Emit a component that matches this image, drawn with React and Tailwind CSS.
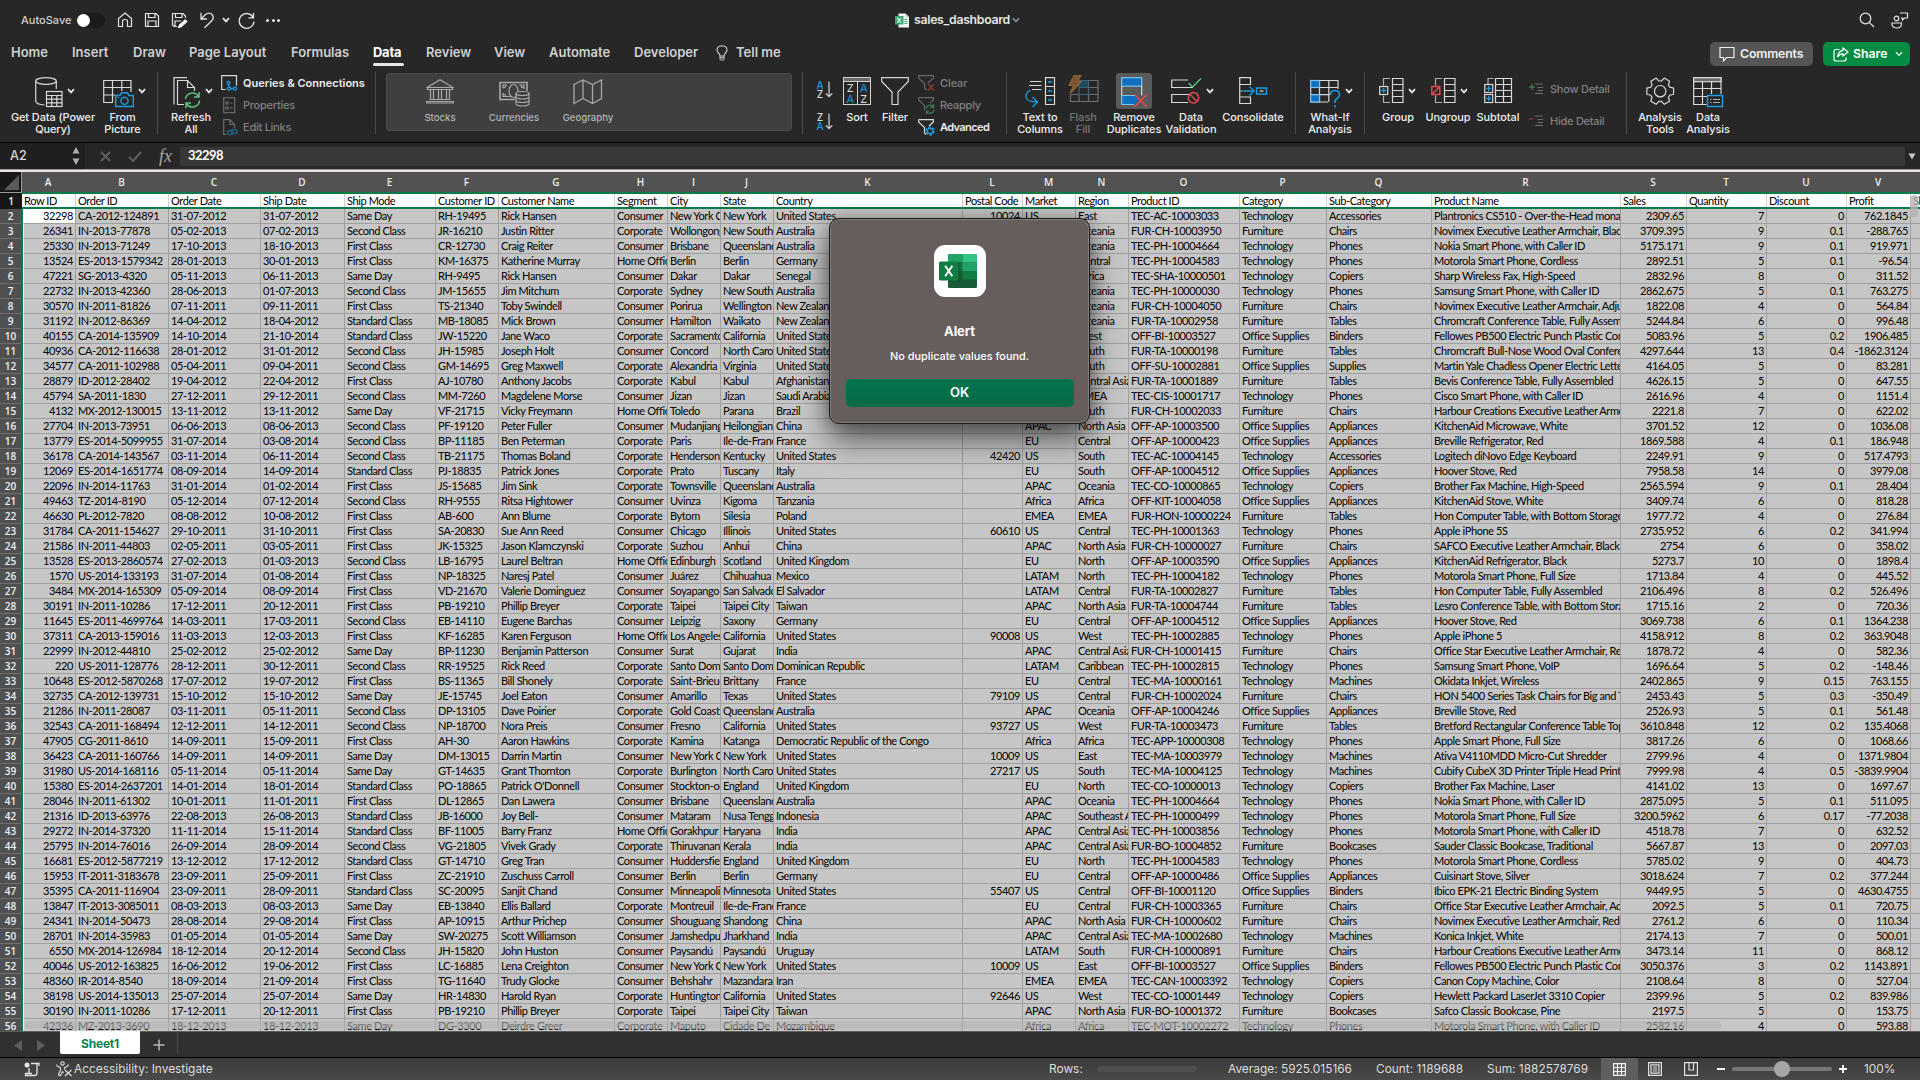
import React from "react";

const COLS = [
  ["A", "w-[54px]", 1], ["B", "w-[93px]"], ["C", "w-[92px]"], ["D", "w-[84px]"], ["E", "w-[91px]"],
  ["F", "w-[63px]"], ["G", "w-[116px]"], ["H", "w-[53px]"], ["I", "w-[53px]"], ["J", "w-[53px]"],
  ["K", "w-[189px]"], ["L", "w-[60px]", 1], ["M", "w-[53px]"], ["N", "w-[53px]"], ["O", "w-[111px]"],
  ["P", "w-[87px]"], ["Q", "w-[105px]"], ["R", "w-[189px]"], ["S", "w-[66px]", 1], ["T", "w-[80px]", 1],
  ["U", "w-[80px]", 1], ["V", "w-[64px]", 1],
];

const HEAD = "Row ID|Order ID|Order Date|Ship Date|Ship Mode|Customer ID|Customer Name|Segment|City|State|Country|Postal Code|Market|Region|Product ID|Category|Sub-Category|Product Name|Sales|Quantity|Discount|Profit".split("|");

const SHIP = { S: "Same Day", "2": "Second Class", "1": "First Class", T: "Standard Class" };
const SEG = { C: "Consumer", P: "Corporate", H: "Home Office" };
const CAT = { TEC: "Technology", FUR: "Furniture", OFF: "Office Supplies" };

const ROWS = `32298|CA-2012-124891|31-07-2012|31-07-2012|S|RH-19495|Rick Hansen|C|New York City|New York|United States|10024|US|East|TEC-AC-10003033|Accessories|Plantronics CS510 - Over-the-Head monaural|2309.65|7|0|762.1845
26341|IN-2013-77878|05-02-2013|07-02-2013|2|JR-16210|Justin Ritter|P|Wollongong|New South Wales|Australia||APAC|Oceania|FUR-CH-10003950|Chairs|Novimex Executive Leather Armchair, Black|3709.395|9|0.1|-288.765
25330|IN-2013-71249|17-10-2013|18-10-2013|1|CR-12730|Craig Reiter|C|Brisbane|Queensland|Australia||APAC|Oceania|TEC-PH-10004664|Phones|Nokia Smart Phone, with Caller ID|5175.171|9|0.1|919.971
13524|ES-2013-1579342|28-01-2013|30-01-2013|1|KM-16375|Katherine Murray|H|Berlin|Berlin|Germany||EU|Central|TEC-PH-10004583|Phones|Motorola Smart Phone, Cordless|2892.51|5|0.1|-96.54
47221|SG-2013-4320|05-11-2013|06-11-2013|S|RH-9495|Rick Hansen|C|Dakar|Dakar|Senegal||Africa|Africa|TEC-SHA-10000501|Copiers|Sharp Wireless Fax, High-Speed|2832.96|8|0|311.52
22732|IN-2013-42360|28-06-2013|01-07-2013|2|JM-15655|Jim Mitchum|P|Sydney|New South Wales|Australia||APAC|Oceania|TEC-PH-10000030|Phones|Samsung Smart Phone, with Caller ID|2862.675|5|0.1|763.275
30570|IN-2011-81826|07-11-2011|09-11-2011|1|TS-21340|Toby Swindell|C|Porirua|Wellington|New Zealand||APAC|Oceania|FUR-CH-10004050|Chairs|Novimex Executive Leather Armchair, Adjustable|1822.08|4|0|564.84
31192|IN-2012-86369|14-04-2012|18-04-2012|T|MB-18085|Mick Brown|C|Hamilton|Waikato|New Zealand||APAC|Oceania|FUR-TA-10002958|Tables|Chromcraft Conference Table, Fully Assembled|5244.84|6|0|996.48
40155|CA-2014-135909|14-10-2014|21-10-2014|T|JW-15220|Jane Waco|P|Sacramento|California|United States|95823|US|West|OFF-BI-10003527|Binders|Fellowes PB500 Electric Punch Plastic Comb|5083.96|5|0.2|1906.485
40936|CA-2012-116638|28-01-2012|31-01-2012|2|JH-15985|Joseph Holt|C|Concord|North Carolina|United States|28027|US|South|FUR-TA-10000198|Tables|Chromcraft Bull-Nose Wood Oval Conference|4297.644|13|0.4|-1862.3124
34577|CA-2011-102988|05-04-2011|09-04-2011|2|GM-14695|Greg Maxwell|P|Alexandria|Virginia|United States|22304|US|South|OFF-SU-10002881|Supplies|Martin Yale Chadless Opener Electric Letter|4164.05|5|0|83.281
28879|ID-2012-28402|19-04-2012|22-04-2012|1|AJ-10780|Anthony Jacobs|P|Kabul|Kabul|Afghanistan||APAC|Central Asia|FUR-TA-10001889|Tables|Bevis Conference Table, Fully Assembled|4626.15|5|0|647.55
45794|SA-2011-1830|27-12-2011|29-12-2011|2|MM-7260|Magdelene Morse|C|Jizan|Jizan|Saudi Arabia||EMEA|EMEA|TEC-CIS-10001717|Phones|Cisco Smart Phone, with Caller ID|2616.96|4|0|1151.4
4132|MX-2012-130015|13-11-2012|13-11-2012|S|VF-21715|Vicky Freymann|H|Toledo|Parana|Brazil||LATAM|South|FUR-CH-10002033|Chairs|Harbour Creations Executive Leather Armchair|2221.8|7|0|622.02
27704|IN-2013-73951|06-06-2013|08-06-2013|2|PF-19120|Peter Fuller|C|Mudanjiang|Heilongjiang|China||APAC|North Asia|OFF-AP-10003500|Appliances|KitchenAid Microwave, White|3701.52|12|0|1036.08
13779|ES-2014-5099955|31-07-2014|03-08-2014|2|BP-11185|Ben Peterman|P|Paris|Ile-de-France|France||EU|Central|OFF-AP-10000423|Appliances|Breville Refrigerator, Red|1869.588|4|0.1|186.948
36178|CA-2014-143567|03-11-2014|06-11-2014|2|TB-21175|Thomas Boland|P|Henderson|Kentucky|United States|42420|US|South|TEC-AC-10004145|Accessories|Logitech diNovo Edge Keyboard|2249.91|9|0|517.4793
12069|ES-2014-1651774|08-09-2014|14-09-2014|T|PJ-18835|Patrick Jones|P|Prato|Tuscany|Italy||EU|South|OFF-AP-10004512|Appliances|Hoover Stove, Red|7958.58|14|0|3979.08
22096|IN-2014-11763|31-01-2014|01-02-2014|1|JS-15685|Jim Sink|P|Townsville|Queensland|Australia||APAC|Oceania|TEC-CO-10000865|Copiers|Brother Fax Machine, High-Speed|2565.594|9|0.1|28.404
49463|TZ-2014-8190|05-12-2014|07-12-2014|2|RH-9555|Ritsa Hightower|C|Uvinza|Kigoma|Tanzania||Africa|Africa|OFF-KIT-10004058|Appliances|KitchenAid Stove, White|3409.74|6|0|818.28
46630|PL-2012-7820|08-08-2012|10-08-2012|1|AB-600|Ann Blume|P|Bytom|Silesia|Poland||EMEA|EMEA|FUR-HON-10000224|Tables|Hon Computer Table, with Bottom Storage|1977.72|4|0|276.84
31784|CA-2011-154627|29-10-2011|31-10-2011|1|SA-20830|Sue Ann Reed|C|Chicago|Illinois|United States|60610|US|Central|TEC-PH-10001363|Phones|Apple iPhone 5S|2735.952|6|0.2|341.994
21586|IN-2011-44803|02-05-2011|03-05-2011|1|JK-15325|Jason Klamczynski|P|Suzhou|Anhui|China||APAC|North Asia|FUR-CH-10000027|Chairs|SAFCO Executive Leather Armchair, Black|2754|6|0|358.02
13528|ES-2013-2860574|27-02-2013|01-03-2013|2|LB-16795|Laurel Beltran|H|Edinburgh|Scotland|United Kingdom||EU|North|OFF-AP-10003590|Appliances|KitchenAid Refrigerator, Black|5273.7|10|0|1898.4
1570|US-2014-133193|31-07-2014|01-08-2014|1|NP-18325|Naresj Patel|C|Juárez|Chihuahua|Mexico||LATAM|North|TEC-PH-10004182|Phones|Motorola Smart Phone, Full Size|1713.84|4|0|445.52
3484|MX-2014-165309|05-09-2014|08-09-2014|1|VD-21670|Valerie Dominguez|C|Soyapango|San Salvador|El Salvador||LATAM|Central|FUR-TA-10002827|Tables|Hon Computer Table, Fully Assembled|2106.496|8|0.2|526.496
30191|IN-2011-10286|17-12-2011|20-12-2011|1|PB-19210|Phillip Breyer|P|Taipei|Taipei City|Taiwan||APAC|North Asia|FUR-TA-10004744|Tables|Lesro Conference Table, with Bottom Storage|1715.16|2|0|720.36
11645|ES-2011-4699764|14-03-2011|17-03-2011|2|EB-14110|Eugene Barchas|C|Leipzig|Saxony|Germany||EU|Central|OFF-AP-10004512|Appliances|Hoover Stove, Red|3069.738|6|0.1|1364.238
37311|CA-2013-159016|11-03-2013|12-03-2013|1|KF-16285|Karen Ferguson|H|Los Angeles|California|United States|90008|US|West|TEC-PH-10002885|Phones|Apple iPhone 5|4158.912|8|0.2|363.9048
22999|IN-2012-44810|25-02-2012|25-02-2012|S|BP-11230|Benjamin Patterson|C|Surat|Gujarat|India||APAC|Central Asia|FUR-CH-10001415|Chairs|Office Star Executive Leather Armchair, Red|1878.72|4|0|582.36
220|US-2011-128776|28-12-2011|30-12-2011|2|RR-19525|Rick Reed|P|Santo Domingo|Santo Domingo|Dominican Republic||LATAM|Caribbean|TEC-PH-10002815|Phones|Samsung Smart Phone, VoIP|1696.64|5|0.2|-148.46
10648|ES-2012-5870268|17-07-2012|19-07-2012|1|BS-11365|Bill Shonely|P|Saint-Brieuc|Brittany|France||EU|Central|TEC-MA-10000161|Machines|Okidata Inkjet, Wireless|2402.865|9|0.15|763.155
32735|CA-2012-139731|15-10-2012|15-10-2012|S|JE-15745|Joel Eaton|C|Amarillo|Texas|United States|79109|US|Central|FUR-CH-10002024|Chairs|HON 5400 Series Task Chairs for Big and Tall|2453.43|5|0.3|-350.49
21286|IN-2011-28087|03-11-2011|05-11-2011|2|DP-13105|Dave Poirier|P|Gold Coast|Queensland|Australia||APAC|Oceania|OFF-AP-10004246|Appliances|Breville Stove, Red|2526.93|5|0.1|561.48
32543|CA-2011-168494|12-12-2011|14-12-2011|2|NP-18700|Nora Preis|C|Fresno|California|United States|93727|US|West|FUR-TA-10003473|Tables|Bretford Rectangular Conference Table Tops|3610.848|12|0.2|135.4068
47905|CG-2011-8610|14-09-2011|15-09-2011|1|AH-30|Aaron Hawkins|P|Kamina|Katanga|Democratic Republic of the Congo||Africa|Africa|TEC-APP-10000308|Phones|Apple Smart Phone, Full Size|3817.26|6|0|1068.66
36423|CA-2011-160766|14-09-2011|14-09-2011|S|DM-13015|Darrin Martin|C|New York City|New York|United States|10009|US|East|TEC-MA-10003979|Machines|Ativa V4110MDD Micro-Cut Shredder|2799.96|4|0|1371.9804
31980|US-2014-168116|05-11-2014|05-11-2014|S|GT-14635|Grant Thornton|P|Burlington|North Carolina|United States|27217|US|South|TEC-MA-10004125|Machines|Cubify CubeX 3D Printer Triple Head Printer|7999.98|4|0.5|-3839.9904
15380|ES-2014-2637201|14-01-2014|18-01-2014|T|PO-18865|Patrick O'Donnell|C|Stockton-on|England|United Kingdom||EU|North|TEC-CO-10000013|Copiers|Brother Fax Machine, Laser|4141.02|13|0|1697.67
28046|IN-2011-61302|10-01-2011|11-01-2011|1|DL-12865|Dan Lawera|C|Brisbane|Queensland|Australia||APAC|Oceania|TEC-PH-10004664|Phones|Nokia Smart Phone, with Caller ID|2875.095|5|0.1|511.095
21316|ID-2013-63976|22-08-2013|26-08-2013|T|JB-16000|Joy Bell-|C|Mataram|Nusa Tenggara|Indonesia||APAC|Southeast Asia|TEC-PH-10000499|Phones|Motorola Smart Phone, Full Size|3200.5962|6|0.17|-77.2038
29272|IN-2014-37320|11-11-2014|15-11-2014|T|BF-11005|Barry Franz|H|Gorakhpur|Haryana|India||APAC|Central Asia|TEC-PH-10003856|Phones|Motorola Smart Phone, with Caller ID|4518.78|7|0|632.52
25795|IN-2014-76016|26-09-2014|28-09-2014|2|VG-21805|Vivek Grady|P|Thiruvananthapuram|Kerala|India||APAC|Central Asia|FUR-BO-10004852|Bookcases|Sauder Classic Bookcase, Traditional|5667.87|13|0|2097.03
16681|ES-2012-5877219|13-12-2012|17-12-2012|T|GT-14710|Greg Tran|C|Huddersfield|England|United Kingdom||EU|North|TEC-PH-10004583|Phones|Motorola Smart Phone, Cordless|5785.02|9|0|404.73
15953|IT-2011-3183678|23-09-2011|25-09-2011|1|ZC-21910|Zuschuss Carroll|C|Berlin|Berlin|Germany||EU|Central|OFF-AP-10000486|Appliances|Cuisinart Stove, Silver|3018.624|7|0.2|377.244
35395|CA-2011-116904|23-09-2011|28-09-2011|T|SC-20095|Sanjit Chand|C|Minneapolis|Minnesota|United States|55407|US|Central|OFF-BI-10001120|Binders|Ibico EPK-21 Electric Binding System|9449.95|5|0|4630.4755
13847|IT-2013-3085011|08-03-2013|08-03-2013|S|EB-13840|Ellis Ballard|P|Montreuil|Ile-de-France|France||EU|Central|FUR-CH-10003365|Chairs|Office Star Executive Leather Armchair, Adjustable|2092.5|5|0.1|720.75
24341|IN-2014-50473|28-08-2014|29-08-2014|1|AP-10915|Arthur Prichep|C|Shouguang|Shandong|China||APAC|North Asia|FUR-CH-10000602|Chairs|Novimex Executive Leather Armchair, Red|2761.2|6|0|110.34
28701|IN-2014-35983|01-05-2014|01-05-2014|S|SW-20275|Scott Williamson|C|Jamshedpur|Jharkhand|India||APAC|Central Asia|TEC-MA-10002680|Machines|Konica Inkjet, White|2174.13|7|0|500.01
6550|MX-2014-126984|18-12-2014|20-12-2014|2|JH-15820|John Huston|C|Paysandú|Paysandú|Uruguay||LATAM|South|FUR-CH-10000891|Chairs|Harbour Creations Executive Leather Armchair|3473.14|11|0|868.12
40046|US-2012-163825|16-06-2012|19-06-2012|1|LC-16885|Lena Creighton|C|New York City|New York|United States|10009|US|East|OFF-BI-10003527|Binders|Fellowes PB500 Electric Punch Plastic Comb|3050.376|3|0.2|1143.891
48360|IR-2014-8540|18-09-2014|21-09-2014|1|TG-11640|Trudy Glocke|C|Behshahr|Mazandaran|Iran||EMEA|EMEA|TEC-CAN-10003392|Copiers|Canon Copy Machine, Color|2108.64|8|0|527.04
38198|US-2014-135013|25-07-2014|25-07-2014|S|HR-14830|Harold Ryan|P|Huntington Beach|California|United States|92646|US|West|TEC-CO-10001449|Copiers|Hewlett Packard LaserJet 3310 Copier|2399.96|5|0.2|839.986
30190|IN-2011-10286|17-12-2011|20-12-2011|1|PB-19210|Phillip Breyer|P|Taipei|Taipei City|Taiwan||APAC|North Asia|FUR-BO-10001372|Bookcases|Safco Classic Bookcase, Pine|2197.5|5|0|153.75
42336|MZ-2013-3690|18-12-2013|18-12-2013|S|DG-3300|Deirdre Greer|P|Maputo|Cidade De Maputo|Mozambique||Africa|Africa|TEC-MOT-10002272|Phones|Motorola Smart Phone, with Caller ID|2582.16|4|0|593.88`
  .split("\n")
  .map((line) => {
    const f = line.split("|");
    return [...f.slice(0, 4), SHIP[f[4]], f[5], f[6], SEG[f[7]], ...f.slice(8, 15), CAT[f[14].slice(0, 3)], ...f.slice(15)];
  });

const W = "#d8d8d8";
const B = "#1a9be0";

function Svg({ w, h, className = "", children, stroke = W, sw = 1.2 }) {
  return (
    <svg width={w} height={h} viewBox={`0 0 ${w} ${h}`} fill="none" stroke={stroke} strokeWidth={sw} className={`block shrink-0 ${className}`}>
      {children}
    </svg>
  );
}

function Chevron({ className = "", color = "#e8e8e8", sw = 1.7 }) {
  return (
    <Svg w={8} h={6} className={className} stroke={color} sw={sw}>
      <path d="M1 1.2 L4 4.4 L7 1.2" />
    </Svg>
  );
}

/* ---------- Title bar ---------- */

function TitleBar() {
  return (
    <div className="flex h-[40px] items-center">
      <span className="ml-[21px] w-[52px] whitespace-nowrap text-[11px] font-medium text-[#cfcfcf]">AutoSave</span>
      <div className="ml-[4px] flex h-[15px] w-[28px] items-center rounded-full bg-[#1b1b1b]">
        <div className="h-[13px] w-[13px] rounded-full bg-white" />
      </div>
      <Svg w={16} h={16} className="ml-[12px]" stroke="#e4e4e4">
        <path d="M1.500 14.500 V6.500 L8 1 L14.500 6.500 V14.500 H10.500 V9.500 Q10.500 7.500 8 7.500 Q5.500 7.500 5.500 9.500 V14.500 Z" />
      </Svg>
      <Svg w={16} h={16} className="ml-[11px]" stroke="#e4e4e4">
        <path d="M1.500 1.500 H12 L14.500 4 V14.500 H1.500 Z M4.500 1.500 V5.500 H11 V1.500 M4 14.500 V9 H12 V14.500" />
      </Svg>
      <Svg w={17} h={16} className="ml-[11px]" stroke="#e4e4e4">
        <path d="M6 14.500 H3 L1.500 13 V1.500 H12 L14.500 4 V6 M4.500 1.500 V5.500 H11 V1.500 M4 14.500 V9 H10" />
        <path d="M14.200 8 L8.500 13 L7.500 15.500 L10.200 14.800 L15.800 9.500 Z" fill="#ffffff" stroke="#ffffff" />
      </Svg>
      <Svg w={15} h={17} className="ml-[12px]" stroke="#e4e4e4" sw={1.300}>
        <path d="M1 0.800 V7 H7 M1.200 6.800 L5.500 2.500 Q9 -0.200 12 2.500 Q14.500 5.500 12 8.500 L4.500 15.800" />
      </Svg>
      <Chevron className="ml-[7px]" />
      <Svg w={17} h={17} className="ml-[8px]" stroke="#e4e4e4" sw={1.300}>
        <path d="M15.500 1 V5.800 H10.500 M15.200 5.500 A7.400 7.400 0 1 0 16 9.500" />
      </Svg>
      <div className="ml-[11px] flex gap-[2.500px]">
        <div className="h-[3px] w-[3px] rounded-full bg-[#e4e4e4]" />
        <div className="h-[3px] w-[3px] rounded-full bg-[#e4e4e4]" />
        <div className="h-[3px] w-[3px] rounded-full bg-[#e4e4e4]" />
      </div>
      <div className="ml-[615px] flex items-center">
        <svg width="15" height="15" viewBox="0 0 15 15" className="block">
          <path d="M3.500 0.500 H10.500 L14 4 V14.500 H3.500 Z" fill="#f3f8f5" />
          <path d="M10.500 0.500 V4 H14 Z" fill="#bcd8c8" />
          <path d="M9.500 6.500 H12.500 M9.500 8.500 H12.500 M9.500 10.500 H12.500" stroke="#3fa877" />
          <rect x="0" y="3" width="8.500" height="8.500" fill="#3fa877" />
          <path d="M2.400 5.200 L6 9.500 M6 5.200 L2.400 9.500" stroke="#fff" strokeWidth="1.100" />
        </svg>
        <span className="ml-[4px] w-[97px] whitespace-nowrap text-[12.300px] font-semibold tracking-[-0.300px] text-[#e6e6e6]">sales_dashboard</span>
        <Chevron className="ml-[1px]" color="#9a9a9a" sw={1.400} />
      </div>
      <Svg w={16} h={16} className="ml-auto" stroke="#e4e4e4" sw={1.200}>
        <circle cx="6.500" cy="6.500" r="5.300" />
        <path d="M10.300 10.300 L15 15" />
      </Svg>
      <Svg w={18} h={17} className="ml-[16px] mr-[11px]" stroke="#e4e4e4" sw={1.200}>
        <circle cx="5.500" cy="6.500" r="2.300" />
        <path d="M1 11 H10.500 V12.500 Q10 16 5.700 16 Q1.500 16 1 12.500 Z M9 1 H16.500 V6 H13.500 L11.500 8 V6 H10" />
      </Svg>
    </div>
  );
}

/* ---------- Tabs ---------- */

function Tabs() {
  const tab = "whitespace-nowrap text-[13px] font-semibold text-[#cfcfcf]";
  return (
    <div className="flex h-[26px] items-center">
      <span className={`${tab} ml-[11px] w-[61px]`}>Home</span>
      <span className={`${tab} w-[61px]`}>Insert</span>
      <span className={`${tab} w-[56px]`}>Draw</span>
      <span className={`${tab} w-[102px]`}>Page Layout</span>
      <span className={`${tab} w-[82px]`}>Formulas</span>
      <span className="mr-[22px] flex h-full w-[31px] flex-col justify-between whitespace-nowrap text-[12.900px] font-bold text-white">
        <span className="pt-[3px] leading-[20px] tracking-[-0.200px]">Data</span>
        <span className="h-[3px] w-full rounded-full bg-[#e6e6e6]" />
      </span>
      <span className={`${tab} w-[68px]`}>Review</span>
      <span className={`${tab} w-[55px]`}>View</span>
      <span className={`${tab} w-[85px]`}>Automate</span>
      <span className={`${tab} w-[82px]`}>Developer</span>
      <Svg w={12} h={16} stroke="#cfcfcf" sw={1.100}>
        <path d="M4 11 Q4 9.500 2.500 8 Q1 6.500 1 5 Q1 1 6 0.800 Q11 1 11 5 Q11 6.500 9.500 8 Q8 9.500 8 11 Z M4 12.800 H8 M4.500 15 H7.500 M4 11 V14.500 M8 11 V14.500" />
      </Svg>
      <span className={`${tab} ml-[8px]`}>Tell me</span>
      <div className="ml-auto mr-[10px] mt-[2px] flex items-center">
        <div className="flex h-[24px] w-[103px] items-center rounded-[5px] bg-[#555555]">
          <Svg w={16} h={16} className="ml-[9px]" stroke="#f0f0f0" sw={1.200}>
            <path d="M1 1.500 H15 V11.500 H7.500 L4.500 15 V11.500 H1 Z" />
          </Svg>
          <span className="ml-[5px] whitespace-nowrap text-[12.300px] font-semibold tracking-[-0.150px] text-[#f0f0f0]">Comments</span>
        </div>
        <div className="ml-[10px] flex h-[24px] w-[87px] items-center rounded-[5px] bg-[#038a43]">
          <Svg w={16} h={15} className="ml-[10px]" stroke="#ffffff" sw={1.200}>
            <path d="M6.500 2.500 H3 Q1 2.500 1 4.500 V12 Q1 14 3 14 H11 Q13 14 13 12 V10.500" />
            <path d="M10 1 L15 5 L10 9 V6.800 Q6.500 6.800 4.500 10 Q5 4.200 10 3.400 Z" />
          </Svg>
          <span className="ml-[4px] whitespace-nowrap text-[12.300px] font-semibold text-white">Share</span>
          <Chevron className="ml-[8px]" color="#ffffff" sw={1.200} />
        </div>
      </div>
    </div>
  );
}

/* ---------- Ribbon ---------- */

function Sep({ className }) {
  return <div className={`h-[62px] w-px shrink-0 bg-[#4a4a4a] ${className}`} />;
}

function Big({ className, icon, lines, chev, dim, active, shift = "ml-[4px]" }) {
  return (
    <div className={`flex shrink-0 flex-col items-center pt-[1px] ${className}`}>
      <div className={`flex h-[36px] items-start pt-[4px] ${active ? "w-[36px] justify-center rounded-[3px] bg-[#5a5a5a]" : ""} ${chev ? shift : ""}`}>
        {icon}
        {chev && <Chevron className="ml-[4px] mt-[11px]" />}
      </div>
      <div className={`mt-[2px] whitespace-nowrap text-center text-[10.900px] font-medium leading-[12px] tracking-[-0.050px] ${dim ? "text-[#767676]" : "text-[#f0f0f0]"}`}>
        {lines.map((l) => (
          <div key={l}>{l}</div>
        ))}
      </div>
    </div>
  );
}

function Small({ icon, label, on, gap = "w-[22px]", tight = "" }) {
  return (
    <div className="flex h-[22px] items-center">
      <span className={`flex shrink-0 ${gap}`}>{icon}</span>
      <span className={`whitespace-nowrap text-[11px] ${tight} ${on ? "font-semibold text-[#ececec]" : "font-medium text-[#808080]"}`}>{label}</span>
    </div>
  );
}

const funnel = "M0.600 0.600 H15.400 V3 L9.500 8.500 V15.400 L6.500 13 V8.500 L0.600 3 Z";

function GetDataIcon() {
  return (
    <Svg w={28} h={31}>
      <ellipse cx="11" cy="4" rx="10.300" ry="3.400" />
      <path d="M0.700 4 V24 Q1 27.500 9.500 28 M21.300 4 V12" />
      <rect x="11.500" y="14.500" width="15.500" height="15" />
      <path d="M11.500 18.500 H27 M11.500 22.200 H27 M11.500 25.900 H27 M16.700 18.500 V29.500 M21.800 18.500 V29.500" />
    </Svg>
  );
}
function FromPictureIcon() {
  return (
    <Svg w={31} h={31}>
      <path d="M10 25.500 H0.700 V3.500 H28 V15 M0.700 10.500 H28 M0.700 18 H12 M9.500 3.500 V25.500 M18.800 3.500 V14" />
      <path d="M12.700 18.500 H17 L18.500 15.700 H24.500 L26 18.500 H30.300 V29.500 H12.700 Z" stroke={B} strokeWidth="1.500" fill="#262626" />
      <circle cx="21.500" cy="23.800" r="3.600" stroke={B} strokeWidth="1.400" />
      <path d="M14.500 20.500 h1.500" stroke={B} />
    </Svg>
  );
}
function RefreshIcon() {
  return (
    <Svg w={28} h={31}>
      <path d="M14 0.700 H1 V27.500 M11 27.500 H4.500 V3.500 H14.500 L21.500 10.500 V14 M14.500 3.500 V10.500 H21.500" />
      <g stroke="#5bc783" strokeWidth="1.500">
        <path d="M12.500 22 A7 7 0 0 1 25.500 19.500 M26.500 23.500 A7 7 0 0 1 13.500 26.500" />
        <path d="M26 15 V20 H21 M13 31 V26 H18" />
      </g>
    </Svg>
  );
}
function QueriesIcon() {
  return (
    <Svg w={17} h={16}>
      <path d="M4.500 14.500 H0.700 V0.700 H15.500 V10.500" />
      <g stroke={B} strokeWidth="1.300">
        <circle cx="7.500" cy="8" r="1.500" />
        <circle cx="8" cy="13.500" r="1.600" />
        <circle cx="14" cy="13.500" r="1.600" />
        <path d="M7.700 9.500 V12 M9.500 13.500 H12.500" />
      </g>
    </Svg>
  );
}
function PropertiesIcon() {
  return (
    <Svg w={14} h={17} stroke="#6c6c6c" className="ml-[2px]">
      <rect x="0.700" y="0.700" width="11" height="15" />
      <path d="M3 5 h2 v2 h-2 Z M3 10 h2 v2 h-2 Z M7 6 H9.500 M7 11 H9.500" />
    </Svg>
  );
}
function EditLinksIcon() {
  return (
    <Svg w={15} h={17} stroke="#6c6c6c" className="ml-[2px]">
      <path d="M3.500 15.500 H0.700 V0.700 H7 L11.500 5.500 V9 M7 0.700 V5.500 H11.500" />
      <g stroke="#1f5f80" strokeWidth="1.400">
        <rect x="4.500" y="11.500" width="5.500" height="4" rx="2" />
        <rect x="8.500" y="10.500" width="5.500" height="4" rx="2" />
      </g>
    </Svg>
  );
}
function StocksIcon() {
  return (
    <Svg w={28} h={25} stroke="#a8a8a8">
      <path d="M1 8.500 L14 0.800 L27 8.500 Z M1.500 8.500 V10.500 H26.500 V8.500 M3.500 20.500 H24.500 M0.700 24 V22.500 H27.300 V24 Z" />
      <path d="M4.500 10.500 V20.500 M7.500 10.500 V20.500 M12.500 10.500 V20.500 M15.500 10.500 V20.500 M20.500 10.500 V20.500 M23.500 10.500 V20.500" />
    </Svg>
  );
}
function CurrenciesIcon() {
  return (
    <Svg w={31} h={28} stroke="#a8a8a8">
      <path d="M16 20.500 H1 V3.500 H28 V12" strokeWidth="1.600" />
      <path d="M13 17.500 H4 V14 M4 9 V6 H8 M20 6 H25 V10 M4 9 Q6.500 9 7 6 M25 9 Q22 9 22 6 M4 14.500 Q6.500 15 7 17.500" />
      <ellipse cx="14.500" cy="12" rx="4.500" ry="6.500" />
      <path d="M17 14.500 V25 Q18 27 23.500 27 Q29 27 30 25 V14.500 Z" fill="#3f3f3f" stroke="none" />
      <ellipse cx="23.500" cy="14.500" rx="6.500" ry="2" fill="#3f3f3f" />
      <path d="M17 14.500 V25 Q18 27 23.500 27 Q29 27 30 25 V14.500 M17 18 Q18 20 23.500 20 Q29 20 30 18 M17 21.500 Q18 23.500 23.500 23.500 Q29 23.500 30 21.500" />
    </Svg>
  );
}
function GeographyIcon() {
  return (
    <Svg w={30} h={26} stroke="#a8a8a8" sw={1.300}>
      <path d="M1 5.500 L10 1 L19.500 5.500 L28.500 1 V19.500 L19.500 24.500 L10 19.500 L1 24.500 Z M10 1 V19.500 M19.500 5.500 V24.500" />
    </Svg>
  );
}
function SortOrder({ a, b, ca, cb }) {
  return (
    <div className="flex h-[17px] items-center">
      <div className="w-[8px] text-center text-[10px] font-medium leading-[8.500px]">
        <div className={ca}>{a}</div>
        <div className={cb}>{b}</div>
      </div>
      <Svg w={9} h={17}>
        <path d="M5 0.500 V15.500 M1.800 12.300 L5 15.700 L8.200 12.300" />
      </Svg>
    </div>
  );
}
function SortIcon() {
  return (
    <div className="flex h-[28px] w-[28px] flex-col border border-[#d0d0d0] text-[11px] leading-[10.500px]">
      <div className="h-[4px] shrink-0 border-b border-[#d0d0d0] bg-[#6a6a6a]" />
      <div className="flex flex-1 text-center">
        <div className="flex-1 border-r border-[#d0d0d0] pt-px">
          <div className="text-[#d8d8d8]">Z</div>
          <div className="text-[#1a9be0]">A</div>
        </div>
        <div className="flex-1 pt-px">
          <div className="text-[#1a9be0]">A</div>
          <div className="text-[#d8d8d8]">Z</div>
        </div>
      </div>
    </div>
  );
}
function FilterIcon() {
  return (
    <Svg w={28} h={29}>
      <path d="M0.700 0.700 H27.300 V4.500 L17 15 V27.500 H11 V15 L0.700 4.500 Z" />
    </Svg>
  );
}
function ClearIcon() {
  return (
    <Svg w={17} h={17} stroke="#666666">
      <path d="M0.600 3 V0.600 H15.400 V3 L10 8 M0.600 3 L6.500 8.500 V13 L9 15.300" />
      <path d="M10 9 L15.800 15.500 M15.800 9 L10 15.500" stroke="#8a3a3a" strokeWidth="1.300" />
    </Svg>
  );
}
function ReapplyIcon() {
  return (
    <Svg w={17} h={17} stroke="#666666">
      <path d="M0.600 0.600 H15.400 V3 L12 6 M6.500 13 V8.500 L0.600 3 V0.600" />
      <path d="M8 11.500 A4 4 0 0 1 15.300 10 M16 12.500 A4 4 0 0 1 8.700 14.500 M15.500 7 V10.300 H12.300 M8.500 17 V14 H11.500" stroke="#3d7d54" strokeWidth="1.200" />
    </Svg>
  );
}
function AdvancedIcon() {
  return (
    <Svg w={17} h={17}>
      <path d="M0.600 0.600 H15.400 V3 L11 7 M8 15.500 L6.500 14 V8.500 L0.600 3 V0.600" />
      <circle cx="12" cy="12" r="3.700" stroke={B} strokeWidth="2" strokeDasharray="2.300 1.570" />
      <circle cx="12" cy="12" r="2.600" stroke={B} />
    </Svg>
  );
}
function TextColsIcon() {
  return (
    <Svg w={31} h={31}>
      <path d="M5 4.500 H16.500 M4 8.500 H16.500 M7 12.500 H16.500" />
      <path d="M20.500 0.700 H29.500 V27.500 H20.500 Z M20.500 9.500 H29.500 M20.500 18.500 H29.500" />
      <g stroke={B} strokeWidth="1.400">
        <path d="M23 5 H27 M23 14 H27 M23 23 H27" />
        <path d="M5 13 Q0.800 16 0.800 20 Q1.500 24.800 12 25 M7.500 20 L12.500 25 L7.500 30" />
      </g>
    </Svg>
  );
}
function FlashFillIcon() {
  return (
    <Svg w={31} h={31} stroke="#6e6e6e" className="-mt-[2px]">
      <path d="M11 5.500 H21 V12.500 H11 Z" fill="#1c4a63" stroke="none" />
      <path d="M14 5.500 H30 V26.500 H2.500 V19.500" />
      <path d="M20.500 12.500 H30 M20.500 19.500 H30 M2.500 19.500 H10 M11 20 V26.500 M20.500 19.500 V26.500" />
      <path d="M11 5.500 H20.500 V19.500 H11 Z M11 12.500 H20.500" stroke="#3d6478" />
      <path d="M6 0.500 H13 L9.500 6.500 H13.500 L2 18.500 L5.500 10.500 H1 Z" fill="#7a5530" stroke="#8a6238" />
    </Svg>
  );
}
function RemoveDupIcon() {
  return (
    <Svg w={27} h={31} className="ml-[1px]">
      <rect x="0.700" y="0.700" width="20" height="8.500" fill="#0f6fc0" stroke="#7cc4f0" />
      <path d="M0.700 9 V18.500 M20.700 9 V18.500" />
      <path d="M14 18.500 H0.700 V27.500 H14 L17.500 23.500 Z" fill="#0f6fc0" stroke="none" />
      <path d="M14 18.500 H0.700 V27.500 H13" stroke="#7cc4f0" />
      <path d="M13.500 17.500 L26 30 M26 17.500 L13.500 30" stroke="#e8484f" strokeWidth="1.600" />
    </Svg>
  );
}
function ValidationIcon() {
  return (
    <Svg w={31} h={28}>
      <path d="M17 3 H0.700 V10.500 H21.500 V9 M19 17.500 H0.700 V25.500 H17" />
      <path d="M17.500 6 L21.500 10 L30 1.500" stroke="#5bc783" strokeWidth="1.400" />
      <circle cx="22.500" cy="20.800" r="5.200" stroke="#e8484f" strokeWidth="1.500" />
      <path d="M19 17.200 L26 24.500" stroke="#e8484f" strokeWidth="1.500" />
    </Svg>
  );
}
function ConsolidateIcon() {
  return (
    <Svg w={29} h={28}>
      <path d="M0.700 0.700 H11.500 V7.500 H0.700 Z M0.700 7.500 V20 M0.700 20 H11.500 V26.500 H0.700 Z" />
      <path d="M0.700 14 H4" stroke="#a0a0a0" />
      <path d="M4.500 14 H14.500 M10.500 9.500 L15 14 L10.500 18.500 M17.500 11 H27.500 V17 H17.500 Z" stroke={B} strokeWidth="1.400" />
      <path d="M20.500 14 H24.500" />
    </Svg>
  );
}
function WhatIfIcon() {
  return (
    <Svg w={31} h={31}>
      <path d="M18 25 H0.700 V3.500 H28 V12 M0.700 10.500 H28 M0.700 17.700 H20 M9.500 3.500 V25 M18.800 3.500 V25" />
      <rect x="0.700" y="3.500" width="8.800" height="7" fill="#0f6fc0" stroke="#7cc4f0" />
      <rect x="0.700" y="17.700" width="8.800" height="7.300" fill="#0f6fc0" stroke="#7cc4f0" />
      <path d="M20.500 18 Q20.500 13.500 25 13.500 Q29.500 13.500 29.500 17.500 Q29.500 20 27 21.500 Q24.800 23 24.800 26 M24.800 28 V30.500" stroke={B} strokeWidth="1.600" />
    </Svg>
  );
}
function GroupIcon({ ungroup }) {
  return (
    <Svg w={25} h={28}>
      <path d="M13.500 1.500 H24 V25.500 H13.500 Z M13.500 7.500 H24 M13.500 13.500 H24 M13.500 19.500 H24" />
      <path d="M11 1.500 H4.500 V8.500 M4.500 18.500 V25.500 H11" stroke="#b0b0b0" />
      {ungroup ? (
        <path d="M0.800 9.500 H8.800 V17.500 H0.800 Z M1 17.300 L8.600 9.700" stroke="#e8484f" strokeWidth="1.400" />
      ) : (
        <g>
          <rect x="0.700" y="9.500" width="8" height="8" />
          <path d="M4.700 11 V16 M2.200 13.500 H7.200" stroke={B} strokeWidth="1.400" />
        </g>
      )}
    </Svg>
  );
}
function SubtotalIcon() {
  return (
    <Svg w={29} h={28}>
      <path d="M11.500 1.500 H27.500 V25.500 H11.500 Z M11.500 7.500 H27.500 M11.500 13.500 H27.500 M11.500 19.500 H27.500 M19.500 1.500 V25.500" />
      <path d="M9.500 1.500 H4 V7.500" stroke="#b0b0b0" />
      <rect x="0.700" y="7.500" width="8" height="8" />
      <rect x="0.700" y="17.500" width="8" height="8" />
      <path d="M4.700 9 V14 M2.200 11.500 H7.200 M4.700 19 V24 M2.200 21.500 H7.200" stroke={B} strokeWidth="1.400" />
    </Svg>
  );
}
function DetailIcon({ plus }) {
  return (
    <Svg w={15} h={12} stroke="#6e6e6e" sw={1}>
      <path d="M6 1 H14 M8.500 4.500 H14 M8.500 7.500 H14 M6 10.500 H14" />
      <path d={plus ? "M3 1 V7 M0 4 H5.500" : "M0 4 H4"} stroke={plus ? "#3d7d54" : "#8a3a3a"} strokeWidth="1.300" />
    </Svg>
  );
}

const GEAR = Array.from({ length: 6 }, (_, k) =>
  [[-23, 10.300], [-13, 13.700], [13, 13.700], [23, 10.300]].map(([da, r]) => {
    const a = ((k * 60 + da) * Math.PI) / 180;
    return `${(14.200 + r * Math.cos(a)).toFixed(2)} ${(14.200 + r * Math.sin(a)).toFixed(2)}`;
  })
)
  .flat()
  .join(" L");

function GearIcon() {
  return (
    <Svg w={29} h={29}>
      <path d={`M${GEAR} Z`} strokeLinejoin="round" />
      <circle cx="14.200" cy="14.200" r="5.700" />
    </Svg>
  );
}
function DataAnalysisIcon() {
  return (
    <Svg w={31} h={31}>
      <path d="M13.500 27.500 H0.700 V0.700 H28 V17 M0.700 11.500 H28 M0.700 19.500 H14 M9.500 4.500 V27.500 M18.500 4.500 V17" />
      <rect x="0.700" y="0.700" width="27.300" height="4" fill="#6a6a6a" />
      <rect x="14.500" y="18.500" width="15" height="11" stroke={B} strokeWidth="1.500" fill="#262626" />
      <path d="M17 22.500 h1.500 M20 22.500 H27 M17 25.500 h1.500 M20 25.500 H27" stroke="#b0b0b0" />
    </Svg>
  );
}

function GalleryItem({ icon, label, className = "" }) {
  return (
    <div className={`flex w-[74px] flex-col items-center pt-[5px] ${className}`}>
      <div className="flex h-[29px] items-start">{icon}</div>
      <span className="mt-[4px] text-[9.600px] font-medium leading-[12px] text-[#b4b4b4]">{label}</span>
    </div>
  );
}

function Ribbon() {
  return (
    <div className="flex h-[76px] items-start pt-[6px]">
      <Big className="ml-[8px] w-[90px]" icon={<GetDataIcon />} chev lines={["Get Data (Power", "Query)"]} />
      <Big className="w-[49px]" icon={<FromPictureIcon />} chev lines={["From", "Picture"]} />
      <Sep className="ml-[10px]" />
      <Big className="ml-[8px] w-[50px]" icon={<RefreshIcon />} chev lines={["Refresh", "All"]} />
      <div className="ml-[5px] w-[154px]">
        <Small icon={<QueriesIcon />} label="Queries & Connections" on />
        <Small icon={<PropertiesIcon />} label="Properties" tight="tracking-[-0.250px]" />
        <Small icon={<EditLinksIcon />} label="Edit Links" tight="tracking-[-0.250px]" />
      </div>
      <Sep />
      <div className="ml-[10px] mt-[1px] flex h-[58px] w-[406px] rounded-[3px] border border-[#4b4b4b] bg-[#3f3f3f]">
        <GalleryItem className="ml-[16px]" icon={<StocksIcon />} label="Stocks" />
        <GalleryItem icon={<CurrenciesIcon />} label="Currencies" />
        <GalleryItem icon={<GeographyIcon />} label="Geography" />
      </div>
      <Sep className="ml-[10px]" />
      <div className="ml-[13px] flex w-[18px] flex-col gap-[15px] pt-[9px]">
        <SortOrder a="A" b="Z" ca="text-[#1a9be0]" cb="text-[#d8d8d8]" />
        <SortOrder a="Z" b="A" ca="text-[#d8d8d8]" cb="text-[#1a9be0]" />
      </div>
      <Big className="ml-[2px] w-[42px]" icon={<SortIcon />} lines={["Sort"]} />
      <Big className="-ml-[1px] w-[36px]" icon={<FilterIcon />} lines={["Filter"]} />
      <div className="ml-[5px] w-[75px]">
        <Small icon={<ClearIcon />} label="Clear" tight="tracking-[-0.100px]" />
        <Small icon={<ReapplyIcon />} label="Reapply" tight="tracking-[-0.250px]" />
        <Small icon={<AdvancedIcon />} label="Advanced" on tight="tracking-[-0.600px]" />
      </div>
      <Sep className="ml-[13px]" />
      <Big className="ml-[8px] w-[50px]" icon={<TextColsIcon />} lines={["Text to", "Columns"]} />
      <Big className="w-[36px]" icon={<FlashFillIcon />} lines={["Flash", "Fill"]} dim />
      <Big className="ml-[2px] w-[62px]" icon={<RemoveDupIcon />} lines={["Remove", "Duplicates"]} active />
      <Big className="-ml-[1px] w-[54px]" icon={<ValidationIcon />} chev lines={["Data", "Validation"]} shift="ml-[2px]" />
      <Big className="ml-[2px] w-[66px]" icon={<ConsolidateIcon />} lines={["Consolidate"]} />
      <Sep className="ml-[9px]" />
      <Big className="ml-[9px] w-[50px]" icon={<WhatIfIcon />} chev lines={["What-If", "Analysis"]} shift="ml-[2px]" />
      <Sep className="ml-[9px]" />
      <Big className="ml-[13px] w-[40px]" icon={<GroupIcon />} chev lines={["Group"]} shift="-ml-[2px]" />
      <Big className="ml-[5px] w-[50px]" icon={<GroupIcon ungroup />} chev lines={["Ungroup"]} shift="ml-[2px]" />
      <Big className="w-[50px]" icon={<SubtotalIcon />} lines={["Subtotal"]} />
      <div className="ml-[6px] flex w-[84px] flex-col gap-[10px] pt-[6px]">
        <Small icon={<DetailIcon plus />} label="Show Detail" gap="w-[21px]" tight="tracking-[-0.250px]" />
        <Small icon={<DetailIcon />} label="Hide Detail" gap="w-[21px]" tight="tracking-[-0.250px]" />
      </div>
      <Sep className="ml-[13px]" />
      <Big className="ml-[10px] w-[46px]" icon={<GearIcon />} lines={["Analysis", "Tools"]} />
      <Big className="ml-[1px] w-[48px]" icon={<DataAnalysisIcon />} lines={["Data", "Analysis"]} />
    </div>
  );
}

/* ---------- Formula bar ---------- */

function FormulaBar() {
  return (
    <div className="flex h-[27px] items-center border-t border-black bg-[#272727]">
      <div className="flex h-full w-[85px] items-center justify-between bg-[#1f1f1f] pl-[10px] pr-[5px]">
        <span className="text-[12.600px] font-medium text-[#d8d8d8]">A2</span>
        <Svg w={8} h={20} stroke="none">
          <path d="M4 1 L7.500 7.500 H0.500 Z M4 19 L7.500 12.500 H0.500 Z" fill="#b0b0b0" />
        </Svg>
      </div>
      <Svg w={11} h={11} className="ml-[15px]" stroke="#5e5e5e" sw={2}>
        <path d="M1 1 L10 10 M10 1 L1 10" />
      </Svg>
      <Svg w={14} h={11} className="ml-[17px]" stroke="#5e5e5e" sw={2}>
        <path d="M1 6 L5 10 L13 1" />
      </Svg>
      <span className="ml-[17px] w-[21px] font-['Liberation_Serif',serif] text-[18px] italic leading-[20px] text-[#a8a8a8]">fx</span>
      <div className="flex h-[19px] w-[1725px] items-center rounded-[2px] bg-[#383838] pl-[8px]">
        <span className="font-['Lato',sans-serif] text-[13px] font-bold tracking-[-0.550px] text-white">32298</span>
      </div>
      <Svg w={8} h={7} className="ml-[3px]" stroke="none">
        <path d="M0.500 0.500 H7.500 L4 6.500 Z" fill="#c8c8c8" />
      </Svg>
    </div>
  );
}

/* ---------- Sheet ---------- */

function Sheet() {
  const num = "shrink-0 text-center font-['Open_Sans',sans-serif] text-[10px] font-semibold tracking-normal text-[#f0f0f0]";
  return (
    <div className="relative h-[862px] overflow-hidden bg-[#c6c6c6] font-['Lato',sans-serif] text-[11px] tracking-[-0.400px] text-black">
      <div className="h-[1px] bg-[#9d9999]" />
      <div className="h-[2px] bg-[#e9e4e4]" />
      <div className="flex h-[20px] bg-[#525252]">
        <div className="flex w-[22px] shrink-0 items-end justify-end border-r border-[#9a9a9a] bg-[#171717] pb-[2px] pr-[2px]">
          <svg width="15" height="15" viewBox="0 0 15 15" className="block">
            <path d="M15 0 V15 H0 Z" fill="#5a5a5a" />
          </svg>
        </div>
        {COLS.map(([c, w]) => (
          <div key={c} className={`${w} flex shrink-0 items-center justify-center pr-[2px] pt-[1px] font-['Open_Sans',sans-serif] text-[10px] font-semibold tracking-normal text-[#ececec]`}>
            {c}
          </div>
        ))}
      </div>
      <div className="flex h-[17px]">
        <div className={`${num} w-[22px] border-t border-[#9a9a9a] bg-[#171717] leading-[16px]`}>1</div>
        <div className="flex w-[1898px] shrink-0 border-b-2 border-t-2 border-[#0b7a4b] bg-white">
          {HEAD.map((h, i) => (
            <div key={h} className={`${COLS[i][1]} shrink-0 overflow-hidden whitespace-nowrap border-r border-[#d0d0d0] pl-[2px] leading-[14px]`}>
              {h}
            </div>
          ))}
          <div className="w-[9px] overflow-hidden pl-[2px] leading-[14px]">Sh</div>
        </div>
      </div>
      {ROWS.map((r, ri) => (
        <div key={ri} className="flex h-[15px]">
          <div className="flex w-[23px] shrink-0 border-r-2 border-[#0b7a4b] bg-[#505050]">
            <div className={`${num} w-[21px] border-b border-[#6e6e6e] leading-[14px]`}>{ri + 2}</div>
          </div>
          {r.map((v, i) => (
            <div
              key={i}
              className={`${i === 0 ? "w-[53px] border-l border-l-white" : COLS[i][1]} shrink-0 overflow-hidden whitespace-nowrap border-b border-r border-b-[#9f9f9f] border-r-[#9f9f9f] leading-[14px] ${
                COLS[i][2] ? "pr-[2px] text-right" : "pl-[2px]"
              } ${ri === 0 && i === 0 ? "bg-white" : ""}`}
            >
              {v}
            </div>
          ))}
          <div className="w-[9px] border-b border-[#9f9f9f]" />
        </div>
      ))}
      <div className="absolute bottom-[2px] left-[25px] h-[8px] w-[1696px] rounded-[4px] bg-[#b4b4b4]/60" />
      <div className="absolute right-[2px] top-[26px] h-[22px] w-[8px] rounded-full bg-[#b4b4b4]/80" />
    </div>
  );
}

/* ---------- Bottom bars ---------- */

function SheetTabs() {
  return (
    <div className="flex h-[27px] items-start border-b border-black border-t border-t-[#5c5c5c] bg-[#303030]">
      <Svg w={8} h={11} className="ml-[14px] mt-[8px]" stroke="none">
        <path d="M8 0 V11 L0 5.500 Z" fill="#5e5e5e" />
      </Svg>
      <Svg w={8} h={11} className="ml-[15px] mt-[8px]" stroke="none">
        <path d="M0 0 V11 L8 5.500 Z" fill="#5e5e5e" />
      </Svg>
      <div className="-mt-[1px] ml-[15px] flex h-[23px] w-[80px] items-center justify-center rounded-b-[2px] bg-white pt-[2px] text-[12px] font-bold tracking-[-0.200px] text-[#08824f]">
        Sheet1
      </div>
      <Svg w={12} h={12} className="ml-[13px] mt-[7px]" stroke="#b8b8b8" sw={1.500}>
        <path d="M6 0.500 V11.500 M0.500 6 H11.500" />
      </Svg>
      <div className="ml-[12px] h-[21px] w-px bg-[#4c4c4c]" />
    </div>
  );
}

function StatusBar() {
  const t = "shrink-0 whitespace-nowrap text-[11.900px] text-[#dcdcdc]";
  return (
    <div className="flex h-[22px] items-center bg-gradient-to-b from-[#3a3a3a] to-[#4a4a4a]">
      <Svg w={16} h={15} className="ml-[24px]" stroke="#e4e4e4" sw={1.300}>
        <circle cx="3" cy="3" r="2.500" fill="#e4e4e4" stroke="none" />
        <path d="M7 1.500 H15 V4 M13 2 V11 Q13 13.500 10.500 13.500 H1.500 V11.500 H8 M5 6 V11" />
      </Svg>
      <Svg w={17} h={16} className="ml-[16px]" stroke="#e4e4e4" sw={1.100}>
        <circle cx="6.500" cy="2.500" r="1.700" />
        <path d="M1 3.500 Q0.500 5 2 5.500 L4.500 6.500 V9 L2.500 13.500 Q3 15.200 4.500 14.500 L6.500 10.500 L7.500 12 M12 3.500 Q12.500 5 11 5.500 L8.500 6.500 V8.500 M9 9 L15.500 15 M15.500 9 L9 15" />
      </Svg>
      <span className={`${t} ml-[1px] w-[975px]`}>Accessibility: Investigate</span>
      <span className={`${t} w-[48px]`}>Rows:</span>
      <div className="h-[6px] w-[100px] shrink-0 rounded-full bg-[#4f4f4f]" />
      <span className={`${t} ml-[31px] w-[148px]`}>Average: 5925.015166</span>
      <span className={`${t} w-[111px]`}>Count: 1189688</span>
      <span className={`${t} w-[114px]`}>Sum: 1882578769</span>
      <div className="flex h-full w-[37px] shrink-0 items-center justify-center bg-[#5e5e5e]">
        <Svg w={13} h={13} stroke="#f0f0f0">
          <path d="M0.600 0.600 H12.400 V12.400 H0.600 Z M0.600 4.500 H12.400 M0.600 8.500 H12.400 M4.500 0.600 V12.400 M8.500 0.600 V12.400" />
        </Svg>
      </div>
      <Svg w={14} h={14} className="ml-[10px]" stroke="#e0e0e0">
        <path d="M0.600 0.600 H13.400 V13.400 H0.600 Z M3 2.800 H11 V11.200 H3 Z M4.800 5 H9.200 M4.800 7 H9.200 M4.800 9 H9.200" />
      </Svg>
      <Svg w={14} h={14} className="ml-[22px]" stroke="#e0e0e0">
        <path d="M0.600 0.600 H13.400 V13.400 H0.600 Z M5 0.600 V8 H9.500 V0.600" />
      </Svg>
      <div className="ml-[19px] h-[2px] w-[8px] shrink-0 bg-white" />
      <div className="ml-[7px] flex h-[4px] w-[100px] shrink-0 items-center justify-center rounded-full bg-[#777777]">
        <div className="h-[16px] w-[16px] shrink-0 rounded-full bg-[#a6a6a6]" />
      </div>
      <Svg w={8} h={8} className="ml-[7px]" stroke="#ffffff" sw={1.800}>
        <path d="M4 0 V8 M0 4 H8" />
      </Svg>
      <span className={`${t} ml-[17px]`}>100%</span>
    </div>
  );
}

/* ---------- Alert ---------- */

function ExcelLogo() {
  return (
    <svg width="39" height="36" viewBox="0 0 39 36" className="block">
      <rect x="9" y="1" width="29" height="34" rx="1.500" fill="#185c37" />
      <path d="M10.500 1 H23.500 V9.500 H9 V2.500 Q9 1 10.500 1 Z" fill="#21a366" />
      <path d="M23.500 1 H36.500 Q38 1 38 2.500 V9.500 H23.500 Z" fill="#33c481" />
      <rect x="9" y="9.500" width="14.500" height="8.500" fill="#107c41" />
      <rect x="23.500" y="9.500" width="14.500" height="8.500" fill="#21a366" />
      <rect x="23.500" y="18" width="14.500" height="8.500" fill="#107c41" />
      <rect x="9" y="9" width="12.500" height="20" fill="#0b4a2a" opacity="0.450" />
      <rect x="0" y="8.500" width="19.500" height="19" rx="1.500" fill="#107c41" />
      <path d="M6.200 12.800 L13.300 23.200 M13.300 12.800 L6.200 23.200" stroke="#fff" strokeWidth="2" />
    </svg>
  );
}

function Alert() {
  return (
    <div className="absolute left-[829px] top-[218px] flex h-[206px] w-[261px] flex-col items-center rounded-[10px] border border-[#1c1818] bg-[#665d5d] shadow-[0_16px_30px_rgba(0,0,0,0.55),0_0_16px_rgba(0,0,0,0.25),inset_0_0_0_1px_rgba(255,255,255,0.2)]">
      <div className="mt-[26px] flex h-[52px] w-[52px] items-center justify-center rounded-[11px] bg-white pr-[3px]">
        <ExcelLogo />
      </div>
      <span className="mt-[26px] text-[13px] font-bold leading-[16px] tracking-[-0.100px] text-white">Alert</span>
      <span className="mt-[10px] whitespace-nowrap text-[10.900px] font-medium leading-[14px] text-white">No duplicate values found.</span>
      <div className="mt-[16px] flex h-[28px] w-[228px] items-center justify-center rounded-[5px] bg-gradient-to-b from-[#04744c] to-[#056a45] text-[13px] font-semibold text-white">
        OK
      </div>
    </div>
  );
}

export default function App() {
  return (
    <div className="relative flex h-[1080px] w-[1920px] flex-col overflow-hidden bg-[#272727] font-['Inter',sans-serif]">
      <TitleBar />
      <Tabs />
      <Ribbon />
      <FormulaBar />
      <Sheet />
      <SheetTabs />
      <StatusBar />
      <Alert />
    </div>
  );
}
